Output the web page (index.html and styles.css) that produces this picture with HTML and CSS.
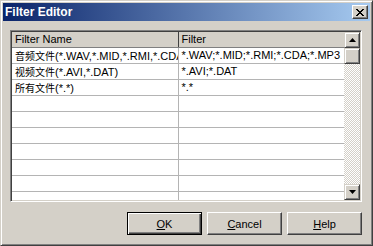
FILE: index.html
```html
<!DOCTYPE html>
<html lang="en">
<head>
  <meta charset="UTF-8">
  <title>Filter Editor</title>
  <link rel="stylesheet" href="styles.css">
</head>
<body>
  <div class="window">
    <div class="titlebar">
      <span class="title">Filter Editor</span>
      <span class="close">
        <svg width="8" height="7" viewBox="0 0 8 7"><path d="M0 0L7 7M1 0L8 7M7 0L0 7M8 0L1 7" stroke="#000" stroke-width="1"/></svg>
      </span>
    </div>

    <div class="grid">
      <div class="cells">
        <div class="row head">
          <div class="cell">Filter Name</div>
          <div class="cell">Filter</div>
        </div>
        <div class="row">
          <div class="cell"><span class="cjk">音频文件</span>(*.WAV,*.MID,*.RMI,*.CDA,*.MP3)</div>
          <div class="cell">*.WAV;*.MID;*.RMI;*.CDA;*.MP3</div>
        </div>
        <div class="row">
          <div class="cell"><span class="cjk">视频文件</span>(*.AVI,*.DAT)</div>
          <div class="cell">*.AVI;*.DAT</div>
        </div>
        <div class="row">
          <div class="cell"><span class="cjk">所有文件</span>(*.*)</div>
          <div class="cell">*.*</div>
        </div>
        <div class="row"><div class="cell"></div><div class="cell"></div></div>
        <div class="row"><div class="cell"></div><div class="cell"></div></div>
        <div class="row"><div class="cell"></div><div class="cell"></div></div>
        <div class="row"><div class="cell"></div><div class="cell"></div></div>
        <div class="row"><div class="cell"></div><div class="cell"></div></div>
        <div class="row"><div class="cell"></div><div class="cell"></div></div>
        <div class="row"><div class="cell"></div><div class="cell"></div></div>
      </div>
      <div class="scrollbar">
        <div class="sbtn"><svg width="7" height="4" viewBox="0 0 7 4"><path d="M3.5 0L7 4H0z" fill="#000"/></svg></div>
        <div class="sbtn thumb"></div>
        <div class="track"></div>
        <div class="sbtn"><svg width="7" height="4" viewBox="0 0 7 4"><path d="M0 0H7L3.5 4z" fill="#000"/></svg></div>
      </div>
    </div>

    <div class="buttons">
      <div class="btn default"><span><u>O</u>K</span></div>
      <div class="btn"><span><u>C</u>ancel</span></div>
      <div class="btn"><span><u>H</u>elp</span></div>
    </div>
  </div>
</body>
</html>
```

FILE: styles.css
```css
body {
  margin: 0;
  padding: 0;
  background-color: #d4d0c8;
  overflow: hidden;
  font-family: "Liberation Sans", Arial, "Noto Sans CJK SC", sans-serif;
  font-size: 11px;
}

.window {
  width: 373px;
  height: 246px;
  box-sizing: border-box;
  padding: 2px;
  background-color: #d4d0c8;
  border: 1px solid;
  border-color: #d4d0c8 #404040 #404040 #d4d0c8;
  box-shadow: inset 1px 1px #fff, inset -1px -1px #808080;
  display: flex;
  flex-direction: column;
}

.titlebar {
  height: 18px;
  display: flex;
  align-items: center;
  justify-content: space-between;
  padding: 0 2px 0 2px;
  background: linear-gradient(to right, #0a246a, #a6caf0);
}

.title {
  color: #fff;
  font-weight: bold;
  font-size: 12px;
}

.close {
  width: 16px;
  height: 14px;
  box-sizing: border-box;
  display: flex;
  align-items: center;
  justify-content: center;
  background-color: #d4d0c8;
  border: 1px solid;
  border-color: #fff #404040 #404040 #fff;
  box-shadow: inset -1px -1px #808080;
}

.grid {
  margin: 9px 8px 0 7px;
  height: 172px;
  box-sizing: border-box;
  display: flex;
  border: 1px solid;
  border-color: #808080 #fff #fff #808080;
  box-shadow: inset 1px 1px #404040, inset -1px -1px #d4d0c8;
  padding: 1px;
  background-color: #fff;
}

.cells {
  flex: 1;
  overflow: hidden;
}

.row {
  display: flex;
  height: 16px;
  box-sizing: border-box;
  border-bottom: 1px solid #b4b4b4;
}

.cell {
  flex: 1;
  box-sizing: border-box;
  padding-left: 3px;
  border-right: 1px solid #b4b4b4;
  white-space: nowrap;
  overflow: hidden;
  line-height: 15px;
  color: #000;
}

.cell:last-child {
  border-right: none;
}

.head {
  background-color: #d4d0c8;
  border-bottom: 1px solid #808080;
}

.head .cell {
  border-right-color: #404040;
}

.cjk {
  font-family: "Noto Sans CJK SC", sans-serif;
  font-size: 10px;
}

.scrollbar {
  width: 16px;
  display: flex;
  flex-direction: column;
}

.sbtn {
  height: 16px;
  box-sizing: border-box;
  display: flex;
  align-items: center;
  justify-content: center;
  background-color: #d4d0c8;
  border: 1px solid;
  border-color: #d4d0c8 #404040 #404040 #d4d0c8;
  box-shadow: inset 1px 1px #fff, inset -1px -1px #808080;
}

.track {
  flex: 1;
  background-image: repeating-conic-gradient(#d4d0c8 0 25%, #fff 0 50%);
  background-size: 2px 2px;
}

.buttons {
  display: flex;
  justify-content: flex-end;
  gap: 5px;
  margin: 10px 8px 0 0;
}

.btn {
  width: 75px;
  height: 23px;
  box-sizing: border-box;
  display: flex;
  align-items: center;
  justify-content: center;
  background-color: #d4d0c8;
  border: 1px solid;
  border-color: #fff #404040 #404040 #fff;
  box-shadow: inset -1px -1px #808080;
  color: #000;
}

.btn.default {
  border: 1px solid #000;
  box-shadow: inset 1px 1px #fff, inset -1px -1px #404040, inset -2px -2px #808080;
}
```
